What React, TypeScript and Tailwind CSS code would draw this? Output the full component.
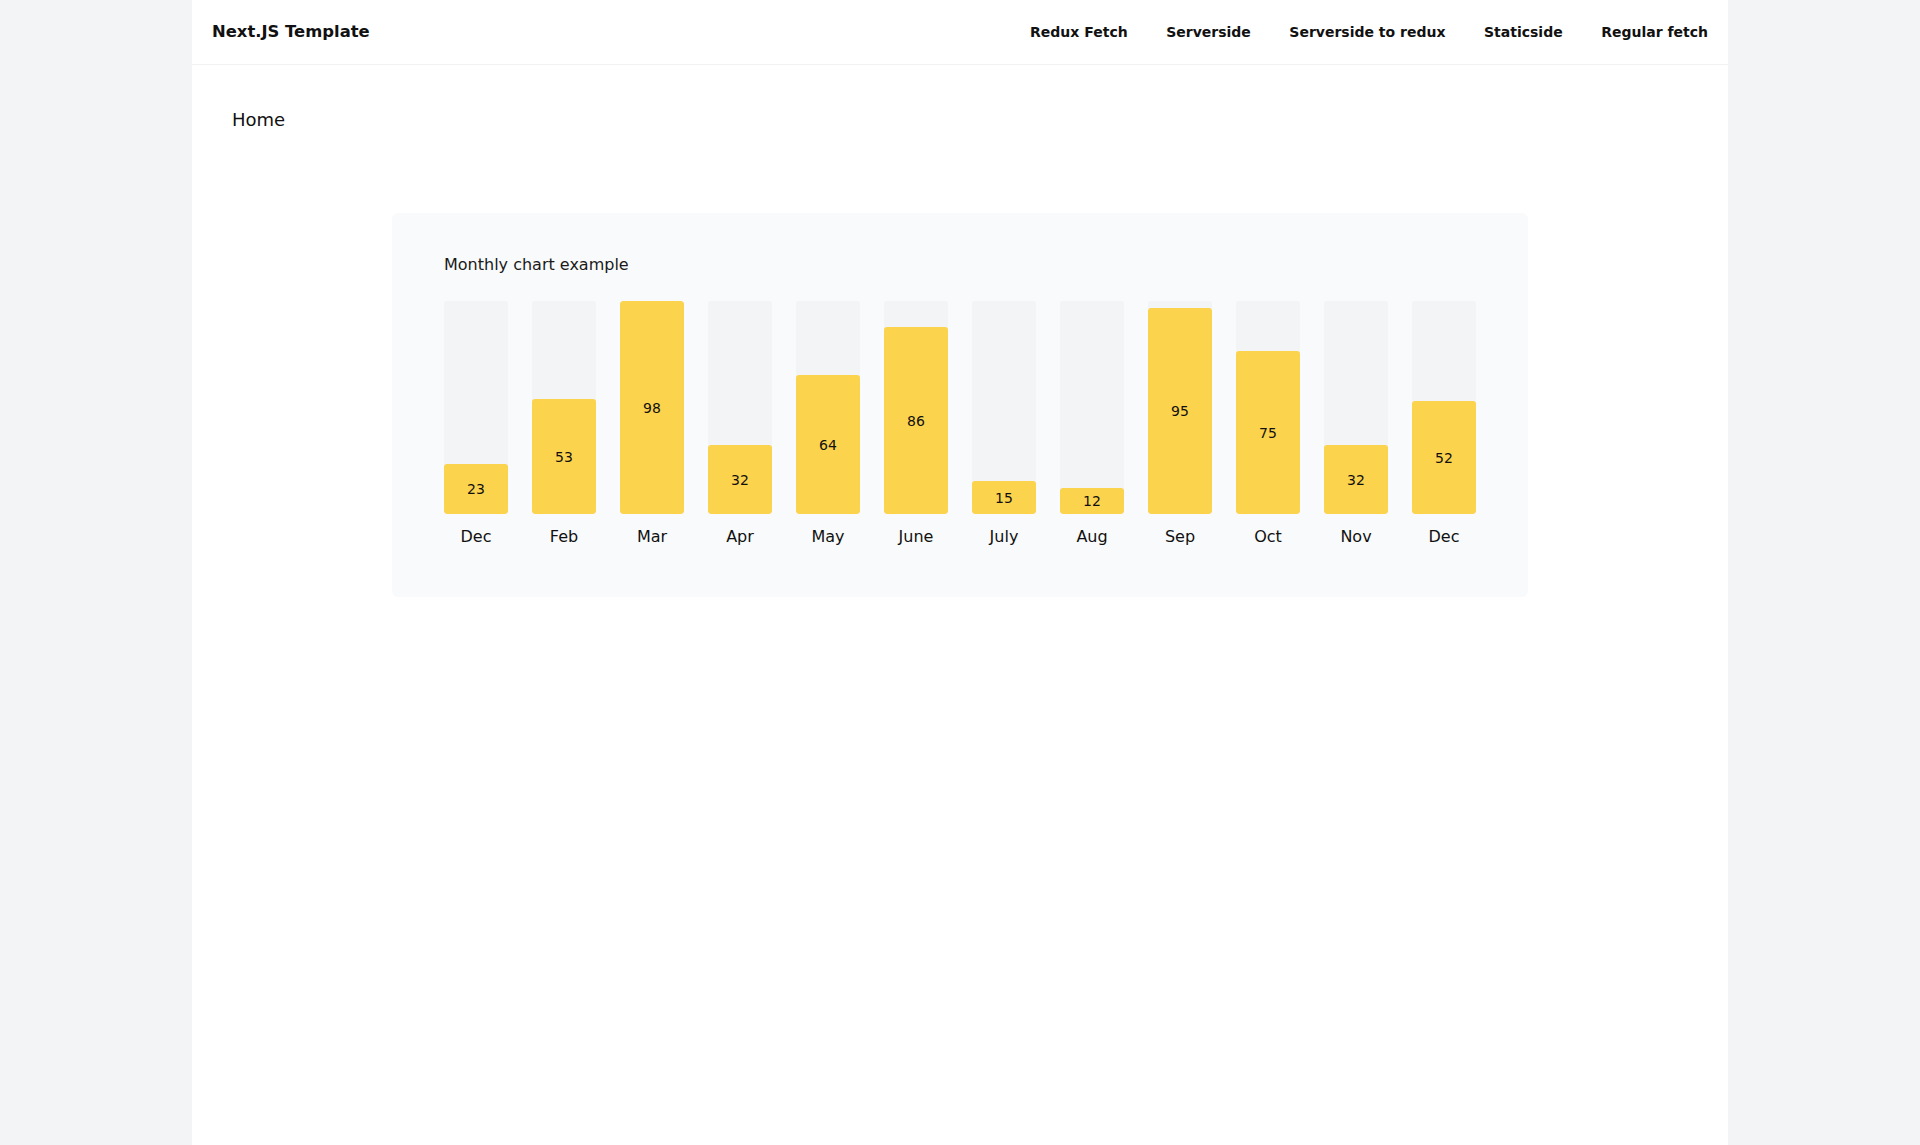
import React from 'react';

interface MonthValue {
  month: string;
  value: number;
}

const data: MonthValue[] = [
  { month: 'Dec', value: 23 },
  { month: 'Feb', value: 53 },
  { month: 'Mar', value: 98 },
  { month: 'Apr', value: 32 },
  { month: 'May', value: 64 },
  { month: 'June', value: 86 },
  { month: 'July', value: 15 },
  { month: 'Aug', value: 12 },
  { month: 'Sep', value: 95 },
  { month: 'Oct', value: 75 },
  { month: 'Nov', value: 32 },
  { month: 'Dec', value: 52 },
];

const links = ['Redux Fetch', 'Serverside', 'Serverside to redux', 'Staticside', 'Regular fetch'];

function Header() {
  return (
    <header className="h-[65px] flex items-center justify-between px-5 border-b border-[#f1f2f4]">
      <a href="#" className="pt-px text-[16.4px] font-bold text-[#111]">
        Next.JS Template
      </a>
      <nav className="flex items-center gap-[38.5px]">
        {links.map((link) => (
          <a key={link} href="#" className="text-sm font-bold text-[#111]">
            {link}
          </a>
        ))}
      </nav>
    </header>
  );
}

function MonthlyChart({ items }: { items: MonthValue[] }) {
  return (
    <div className="mx-auto w-fit rounded-md bg-[#f9fafb] px-[52px] pt-10 pb-12">
      <h2 className="text-base leading-6 text-[#1a1a1a] mb-6">Monthly chart example</h2>
      <div className="flex gap-6">
        {items.map((item, index) => (
          <div key={`${item.month}-${index}`} className="flex flex-col items-center">
            <div className="w-16 h-[213px] rounded-[3px] bg-[#f3f4f6] flex items-end overflow-hidden">
              <div
                className="w-full rounded-[3px] bg-[#fcd34d] flex items-center justify-center text-sm text-[#111]"
                style={{ height: Math.min(213, Math.round(item.value * 2.17)) }}
              >
                {item.value}
              </div>
            </div>
            <span className="mt-[11px] text-base leading-6 text-[#111]">{item.month}</span>
          </div>
        ))}
      </div>
    </div>
  );
}

export default function App() {
  return (
    <div className="min-h-screen bg-[#f3f4f6] font-['DejaVu_Sans',sans-serif]">
      <div className="mx-auto max-w-[1536px] min-h-screen bg-white">
        <Header />
        <main className="px-10 pt-[41px]">
          <h1 className="text-lg leading-7 text-[#111]">Home</h1>
          <section className="mt-[79px]">
            <MonthlyChart items={data} />
          </section>
        </main>
      </div>
    </div>
  );
}
